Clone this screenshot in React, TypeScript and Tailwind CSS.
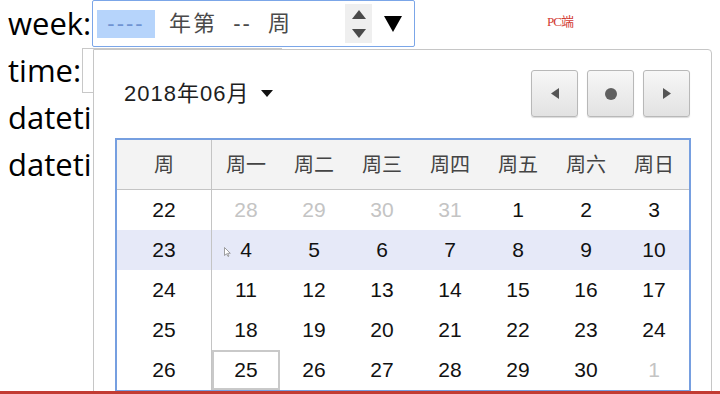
const weeks = [
  { no: 22, days: [28, 29, 30, 31, 1, 2, 3], dim: [0, 1, 2, 3] },
  { no: 23, days: [4, 5, 6, 7, 8, 9, 10], dim: [] as number[] },
  { no: 24, days: [11, 12, 13, 14, 15, 16, 17], dim: [] as number[] },
  { no: 25, days: [18, 19, 20, 21, 22, 23, 24], dim: [] as number[] },
  { no: 26, days: [25, 26, 27, 28, 29, 30, 1], dim: [6] },
];

const heads = ["周一", "周二", "周三", "周四", "周五", "周六", "周日"];

const label = "font-['Open_Sans','Noto_Sans',sans-serif] text-[31px] text-black leading-none whitespace-nowrap";
const cjk = "font-['Liberation_Sans','Noto_Sans_CJK_SC',sans-serif]";

const NavButton = ({ children }: { children: React.ReactNode }) => (
  <button className="w-[47px] h-[47px] flex items-center justify-center rounded-[3px] border border-[#b8b8b8] bg-gradient-to-b from-[#f7f7f7] to-[#e2e2e2] shadow-[0_1px_1px_rgba(0,0,0,0.15)]">
    {children}
  </button>
);

export default function App() {
  return (
    <div className="relative w-[720px] h-[394px] overflow-hidden bg-white">
      <div className="flex flex-col pl-2">
        <div className="flex items-center h-[47px]">
          <span className={`${label} w-[84px]`}>week:</span>
          <div className="w-[323px] h-[47px] flex items-center border border-[#7ba6e8] rounded-[2px] bg-white">
            <span className={`${cjk} ml-[4px] h-[28px] w-[58px] flex items-center justify-center bg-[#b6d4fb] text-[#6f93d2] text-[22px] tracking-[2px]`}>
              ----
            </span>
            <span className={`${cjk} ml-[14px] text-[22px] text-[#4a4a4a] whitespace-pre tracking-[2px]`}>年第  --  周</span>
            <div className="ml-auto w-[27px] h-[39px] bg-[#efefef] flex flex-col items-center justify-center gap-[10px]">
              <svg width="14" height="9" viewBox="0 0 14 9"><path d="M7 0L14 9H0Z" fill="#4a4a4a" /></svg>
              <svg width="14" height="9" viewBox="0 0 14 9"><path d="M0 0H14L7 9Z" fill="#4a4a4a" /></svg>
            </div>
            <svg className="ml-[12px] mr-[12px]" width="18" height="16" viewBox="0 0 18 16"><path d="M0 0H18L9 16Z" fill="#000" /></svg>
          </div>
        </div>
        <div className="flex items-center h-[47px]">
          <span className={`${label} w-[74px]`}>time:</span>
          <div className="w-[200px] h-[45px] border border-[#c8c8c8]" />
        </div>
        <div className="flex items-center h-[47px]">
          <span className={`${label} w-[84px] overflow-hidden`}>datetime:</span>
        </div>
        <div className="flex items-center h-[46px]">
          <span className={`${label} w-[84px] overflow-hidden`}>datetime-local:</span>
        </div>
      </div>

      <span className="absolute left-[547px] top-[12px] font-['Liberation_Serif','Noto_Sans_CJK_SC',serif] text-[13px] text-[#d23a32] tracking-[-1px]">
        PC端
      </span>

      <div className="absolute left-[93px] top-[49px] w-[619px] h-[360px] border border-[#c6c6c6] rounded-tr-[4px] bg-white px-[21px] pt-[20px]">
        <div className="flex items-center h-[47px]">
          <span className={`${cjk} ml-[9px] text-[22px] text-[#1e1e1e] tracking-[1px]`}>2018年06月</span>
          <svg className="ml-[12px]" width="12" height="7" viewBox="0 0 12 7"><path d="M0 0H12L6 7Z" fill="#111" /></svg>
          <div className="ml-auto flex gap-[9px]">
            <NavButton>
              <svg width="8" height="11" viewBox="0 0 8 11"><path d="M8 0V11L0 5.5Z" fill="#555" /></svg>
            </NavButton>
            <NavButton>
              <span className="w-[12px] h-[12px] rounded-full bg-[#606060]" />
            </NavButton>
            <NavButton>
              <svg width="8" height="11" viewBox="0 0 8 11"><path d="M0 0V11L8 5.5Z" fill="#555" /></svg>
            </NavButton>
          </div>
        </div>

        <div className="mt-[21px] w-[576px] border-2 border-[#769fe0] font-['Liberation_Sans',Arial,sans-serif] text-[21px] text-[#111]">
          <div className="flex h-[50px] bg-[#f3f3f3] border-b border-[#c4c4c4]">
            <div className={`${cjk} w-[95px] flex items-center justify-center border-r border-[#c4c4c4] text-[20px] text-[#444]`}>周</div>
            {heads.map((h) => (
              <div key={h} className={`${cjk} w-[68px] flex items-center justify-center text-[20px] text-[#444]`}>{h}</div>
            ))}
          </div>
          {weeks.map((w) => (
            <div key={w.no} className={`flex h-[40px] ${w.no === 23 ? "bg-[#e6e9f8]" : ""}`}>
              <div className="w-[95px] flex items-center justify-center border-r border-[#c4c4c4]">{w.no}</div>
              {w.days.map((d, i) => (
                <div
                  key={i}
                  className={`relative w-[68px] flex items-center justify-center ${
                    w.dim.includes(i) ? "text-[#c4c4c4]" : ""
                  } ${w.no === 26 && i === 0 ? "border-2 border-[#c9c9c9]" : ""}`}
                >
                  {w.no === 23 && i === 0 && (
                    <svg className="absolute left-[12px] top-[17px]" width="7" height="10" viewBox="0 0 7 10">
                      <path d="M0.5 0.5V8.5L2.5 6.8L4 9.5L5 9L3.6 6.3H6.3Z" fill="#fff" stroke="#888" strokeWidth="0.8" />
                    </svg>
                  )}
                  {d}
                </div>
              ))}
            </div>
          ))}
        </div>
      </div>

      <div className="absolute left-0 bottom-0 w-full h-[3px] bg-[#c23b33]" />
    </div>
  );
}
